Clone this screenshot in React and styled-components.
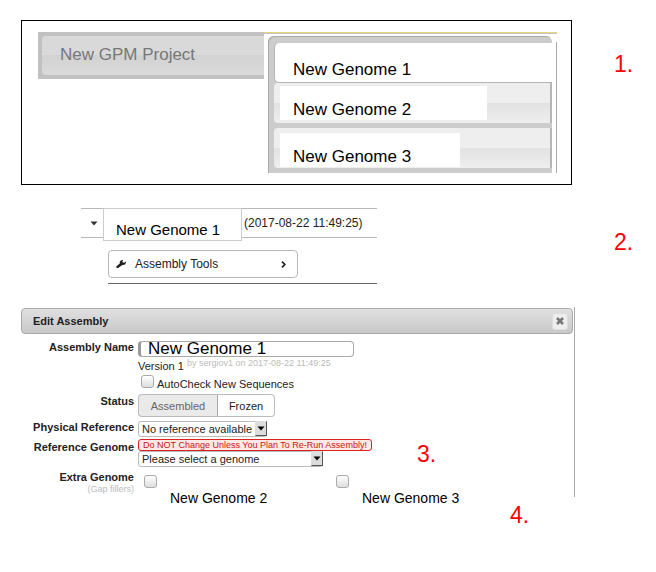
import React from "react";
import styled, { createGlobalStyle } from "styled-components";

const GlobalStyle = createGlobalStyle`
  * { box-sizing: border-box; }
  body {
    margin: 0;
    background: #fff;
    color: #222;
    font-family: "Liberation Sans", Arial, sans-serif;
    font-size: 11px;
    line-height: 14px;
  }
  button, input, select {
    margin: 0;
    font-family: inherit;
    color: inherit;
  }
`;

const Page = styled.main`
  padding: 20px 0 20px 21px;
`;

const Step = styled.section`
  display: grid;
  grid-template-columns: minmax(0, 1fr) 84px;
  margin-top: ${(p) => p.$gap || 0}px;
`;

const StepNumber = styled.span`
  padding-top: ${(p) => p.$top || 0}px;
  padding-left: ${(p) => p.$left || 0}px;
  font-size: 23px;
  line-height: 26px;
  color: #f00;
`;

/* Step 1: project menu */

const Frame = styled.div`
  display: flex;
  align-items: flex-start;
  padding: 11px 14px 11px 16px;
  border: 1px solid #000;
`;

const ProjectButton = styled.button`
  flex: 0 0 226px;
  height: 47px;
  padding: 0;
  border: 4px solid #c1c1c1;
  border-right-width: 0;
  background: #c1c1c1;
  text-align: left;
`;

const ProjectLabel = styled.span`
  display: block;
  height: 39px;
  padding: 9px 18px;
  border-radius: 4px 0 0 4px;
  background: linear-gradient(#d9d9d9 0 50%, #d2d2d2 50%, #dadada);
  color: #777;
  font-size: 17px;
  line-height: 20px;
`;

const MenuArea = styled.div`
  flex: 1;
  display: flex;
  padding: 3px 0 0 4px;
  border-top: 1px solid #e8d27a;
  box-shadow: inset 0 1px #c4c4c4;
`;

const MenuRule = styled.div`
  width: 1px;
  margin: 6px 0 0 4px;
  background: #aaa;
`;

const Menu = styled.div`
  flex: 1;
  display: flex;
  flex-direction: column;
  padding: 7px 0 5px 6px;
  border-radius: 6px 6px 0 0;
  background: #ccc;
  box-shadow: inset 1px 1px #aaa;
`;

const MenuItem = styled.button`
  display: flex;
  align-items: flex-start;
  height: 40px;
  padding: ${(p) => p.$top}px 0 0 ${(p) => (p.$active ? 5 : 6)}px;
  margin-bottom: ${(p) => (p.$active ? 0 : p.$gap)}px;
  border: 0 solid #b5b5b5;
  border-width: ${(p) => (p.$active ? "0 0 1px 1px" : "0 2px 0 0")};
  border-radius: ${(p) => (p.$active ? "5px 0 0 5px" : "4px 0 0 4px")};
  background: ${(p) => (p.$active ? "#fff" : "linear-gradient(#eee 0 50%, #e2e2e2 50%, #eee)")};
  color: #000;
`;

const MenuText = styled.span`
  flex: 0 1 ${(p) => p.$width}px;
  padding: 14px 0 0 13px;
  background: #fff;
  font-size: 17px;
  line-height: 20px;
  text-align: left;
`;

/* Step 2: assembly summary */

const Summary = styled.div`
  width: 100%;
  max-width: 356px;
  padding-left: 60px;
`;

const SummaryRow = styled.div`
  display: flex;
  align-items: flex-start;
  height: 30px;
  border: 1px solid #b8b8b8;
  border-width: 1px 0;
`;

const CaretButton = styled.button`
  width: 22px;
  height: 28px;
  padding: 0 0 4px 4px;
  border: 0;
  background: none;
`;

const NameTag = styled.div`
  width: 139px;
  height: 33px;
  margin-top: -1px;
  padding: 12px 0 0 12px;
  border: 1px solid #ccc;
  background: #fff;
  color: #000;
  font-size: 15px;
  line-height: 18px;
`;

const Stamp = styled.time`
  padding: 6px 0 0 2px;
  font-size: 12px;
  line-height: 16px;
`;

const ToolsArea = styled.div`
  margin: 12px 0 0 27px;
  padding-bottom: 5px;
  border-bottom: 1px solid #666;
`;

const ToolsButton = styled.button`
  display: flex;
  align-items: center;
  width: 190px;
  height: 28px;
  padding: 0 11px 0 7px;
  border: 1px solid #b8b8b8;
  border-radius: 4px;
  background: #fff;
  font-size: 12px;
  line-height: 16px;
`;

const ToolsText = styled.span`
  flex: 1;
  padding-left: 8px;
  text-align: left;
`;

/* Step 3: edit dialog */

const Dialog = styled.form`
  margin: 23px 81px 0 0;
  padding-top: 1px;
  border-right: 1px solid #aaa;
`;

const DialogHeader = styled.header`
  display: flex;
  align-items: center;
  justify-content: space-between;
  height: 26px;
  margin-right: 1px;
  padding: 0 4px 0 11px;
  border: 1px solid #aaa;
  border-radius: 4px;
  background: linear-gradient(#e0e0e0, #c8c8c8);
`;

const Title = styled.h1`
  margin: 0;
  font-size: 11px;
`;

const CloseButton = styled.button`
  display: grid;
  place-items: center;
  width: 16px;
  height: 17px;
  padding: 0;
  border: 1px solid #ddd;
  border-radius: 3px;
  background: #eee;
`;

const Fields = styled.div`
  padding-top: 6px;
`;

const Row = styled.div`
  display: grid;
  grid-template-columns: 113px minmax(0, 1fr);
  column-gap: 4px;
  min-height: ${(p) => p.$height}px;
`;

const RowLabel = styled.label`
  padding-top: ${(p) => p.$top || 0}px;
  font-weight: bold;
  text-align: right;
  white-space: nowrap;
`;

const Note = styled.small`
  display: block;
  color: #bbb;
  font-size: 9px;
  font-weight: normal;
  line-height: 10px;
`;

const Controls = styled.div`
  padding-top: ${(p) => p.$top || 0}px;
`;

const NameInput = styled.input`
  display: block;
  width: 216px;
  height: 16px;
  padding: 0 8px 0 7px;
  border: 1px solid #aaa;
  border-left: 3px solid #999;
  border-radius: 4px;
  background: #fff;
  color: #000;
  font-size: 17px;
  line-height: 14px;
`;

const Version = styled.div`
  display: flex;
  gap: 3px;
  padding-top: 2px;
  height: 18px;

  ${Note} {
    line-height: 8px;
  }
`;

const CheckLine = styled.div`
  display: flex;
  gap: 3px;
  padding-left: 3px;
  white-space: nowrap;

  label { padding-top: 2px; }
`;

const Tick = styled.input.attrs({ type: "checkbox" })`
  appearance: none;
  flex: none;
  width: 13px;
  height: 13px;
  border: 1px solid #aaa;
  border-radius: 3px;
  background: linear-gradient(#fff, #ddd);

  &:checked { background: #999; }
`;

const Toggle = styled.div`
  display: flex;
`;

const ToggleButton = styled.button`
  width: ${(p) => p.$width}px;
  height: 23px;
  padding: 0;
  border: 1px solid #bbb;
  border-left-width: ${(p) => (p.$on ? 1 : 0)}px;
  border-right-color: ${(p) => (p.$on ? "#aaa" : "#bbb")};
  border-radius: ${(p) => (p.$on ? "4px 0 0 4px" : "0 4px 4px 0")};
  background: ${(p) => (p.$on ? "#eaeaea" : "#fff")};
  color: ${(p) => (p.$on ? "#666" : "#222")};
  font-size: 11px;
`;

const SelectBox = styled.div`
  display: grid;
  width: ${(p) => p.$width}px;
  height: 16px;

  > * { grid-area: 1 / 1; }
`;

const Select = styled.select`
  appearance: none;
  width: 100%;
  height: 16px;
  padding: 0 14px 0 3px;
  border: 1px solid #bbb;
  border-radius: 3px;
  background: #fff;
  font-size: 11px;
  line-height: 14px;
`;

const Arrow = styled.span`
  display: grid;
  place-items: center;
  justify-self: end;
  width: 12px;
  height: 15px;
  border: 1px solid #ddd;
  border-right-color: #555;
  border-bottom-color: #555;
  background: #ddd;
  pointer-events: none;
`;

const Warned = styled.div`
  display: flex;
  align-items: flex-start;
`;

const Warning = styled.p`
  width: 234px;
  height: 12px;
  margin: 0;
  border: 1px solid #d22;
  border-radius: 3px;
  background: #fee9e6;
  color: #c11;
  font-size: 9px;
  line-height: 11px;
  white-space: nowrap;
  text-align: center;
`;

const Options = styled.div`
  display: grid;
  grid-template-columns: 192px minmax(0, 1fr);
  padding: 6px 0 0 6px;
  margin-bottom: -10px;
`;

const Option = styled.div`
  display: grid;

  label {
    padding-left: 26px;
    color: #000;
    font-size: 14px;
    line-height: 16px;
  }
`;

const DownIcon = ({ color = "#000" }) => (
  <svg width="8" height="5" viewBox="0 0 8 5" aria-hidden="true">
    <path d="M0.5 0.5h7L4 4.5z" fill={color} />
  </svg>
);

const WrenchIcon = () => (
  <svg width="11" height="10" viewBox="0 0 11 10" aria-hidden="true">
    <path d="M.7 7 3.800 4.400C3.300 2.300 4.900.6 7.200 1L6.300 2.400l.7 1.200 2-.2.8-1.100C10.700 4.500 8.500 6.600 6.300 6L2.500 8.700C1 9.500-.4 8.200.7 7z" fill="#222" />
  </svg>
);

const RightIcon = () => (
  <svg width="5" height="7" viewBox="0 0 5 7" aria-hidden="true">
    <path d="M1 .7 3.800 3.500 1 6.300" fill="none" stroke="#222" strokeWidth="1.700" />
  </svg>
);

const CloseIcon = () => (
  <svg width="8" height="8" viewBox="0 0 8 8" aria-hidden="true">
    <path d="M1 1 7 7M7 1 1 7" stroke="#777" strokeWidth="2.600" />
  </svg>
);

function SelectField({ id, width, text }) {
  return (
    <SelectBox $width={width}>
      <Select id={id}>
        <option>{text}</option>
      </Select>
      <Arrow><DownIcon /></Arrow>
    </SelectBox>
  );
}

export default function App() {
  return (
    <Page>
      <GlobalStyle />
      <Step>
        <Frame>
          <ProjectButton type="button"><ProjectLabel>New GPM Project</ProjectLabel></ProjectButton>
          <MenuArea>
            <Menu>
              <MenuItem type="button" $active $top={3}><MenuText $width={207}>New Genome 1</MenuText></MenuItem>
              <MenuItem type="button" $top={3} $gap={5}><MenuText $width={207}>New Genome 2</MenuText></MenuItem>
              <MenuItem type="button" $top={5} $gap={0}><MenuText $width={180}>New Genome 3</MenuText></MenuItem>
            </Menu>
            <MenuRule />
          </MenuArea>
        </Frame>
        <StepNumber $top={31} $left={42}>1.</StepNumber>
      </Step>

      <Step $gap={23}>
        <Summary>
          <SummaryRow>
            <CaretButton type="button" aria-label="Expand"><DownIcon color="#333" /></CaretButton>
            <NameTag>New Genome 1</NameTag>
            <Stamp>(2017-08-22 11:49:25)</Stamp>
          </SummaryRow>
          <ToolsArea>
            <ToolsButton type="button">
              <WrenchIcon />
              <ToolsText>Assembly Tools</ToolsText>
              <RightIcon />
            </ToolsButton>
          </ToolsArea>
        </Summary>
        <StepNumber $top={21} $left={42}>2.</StepNumber>
      </Step>

      <Dialog onSubmit={(e) => e.preventDefault()}>
        <DialogHeader>
          <Title>Edit Assembly</Title>
          <CloseButton type="button" aria-label="Close"><CloseIcon /></CloseButton>
        </DialogHeader>
        <Fields>
          <Row $height={53}>
            <RowLabel htmlFor="name">Assembly Name</RowLabel>
            <Controls $top={1}>
              <NameInput id="name" type="text" defaultValue="New Genome 1" />
              <Version>Version 1 <Note>by sergiov1 on 2017-08-22 11:49:25</Note></Version>
              <CheckLine>
                <Tick id="auto" />
                <label htmlFor="auto">AutoCheck New Sequences</label>
              </CheckLine>
            </Controls>
          </Row>
          <Row $height={27}>
            <RowLabel as="span" $top={1}>Status</RowLabel>
            <Controls $top={1}>
              <Toggle>
                <ToggleButton type="button" $on $width={80}>Assembled</ToggleButton>
                <ToggleButton type="button" $width={57}>Frozen</ToggleButton>
              </Toggle>
            </Controls>
          </Row>
          <Row $height={19}>
            <RowLabel htmlFor="physical">Physical Reference</RowLabel>
            <Controls $top={1}>
              <SelectField id="physical" width={129} text="No reference available" />
            </Controls>
          </Row>
          <Row $height={30}>
            <RowLabel htmlFor="reference" $top={1}>Reference Genome</RowLabel>
            <Warned>
              <div>
                <Warning>Do NOT Change Unless You Plan To Re-Run Assembly!</Warning>
                <SelectField id="reference" width={185} text="Please select a genome" />
              </div>
              <StepNumber $top={2} $left={45}>3.</StepNumber>
            </Warned>
          </Row>
          <Row $height={28}>
            <RowLabel as="div" $top={1}>
              Extra Genome
              <Note>(Gap fillers)</Note>
            </RowLabel>
            <Options>
              <Option>
                <Tick id="genome2" />
                <label htmlFor="genome2">New Genome 2</label>
              </Option>
              <Option>
                <Tick id="genome3" />
                <label htmlFor="genome3">New Genome 3</label>
              </Option>
            </Options>
          </Row>
        </Fields>
      </Dialog>
      <Step $gap={5}>
        <StepNumber $left={489}>4.</StepNumber>
      </Step>
    </Page>
  );
}
